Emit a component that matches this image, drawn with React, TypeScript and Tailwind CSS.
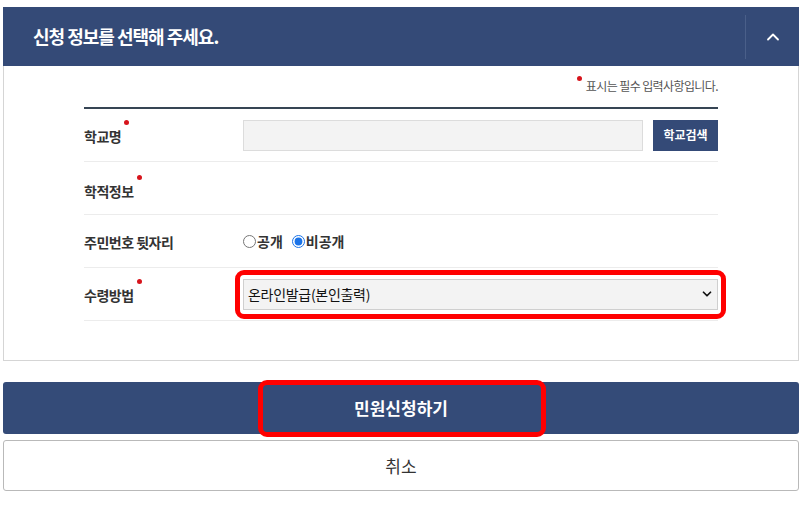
import React, { useState } from 'react';
import { ChevronUp, ChevronDown } from 'lucide-react';

const font = { fontFamily: '"Noto Sans CJK KR", "Noto Sans", sans-serif' };

const Dot = () => (
  <span className="absolute -right-[8px] -top-[6px] w-[5px] h-[5px] rounded-full bg-[#d7141c]" />
);

const Label: React.FC<{ text: string; required?: boolean }> = ({ text, required }) => (
  <div className="w-[159px] shrink-0">
    <span className="relative text-[14px] font-bold text-[#333] tracking-[-0.5px]">
      {text}
      {required && <Dot />}
    </span>
  </div>
);

const App: React.FC = () => {
  const [open, setOpen] = useState('N');

  return (
    <div className="w-[807px] h-[510px] bg-white px-[3px] pt-[7px]" style={font}>
      <div className="w-[796px]">
        {/* header */}
        <div className="h-[59px] bg-[#344a77] flex items-center justify-between">
          <h2 className="pl-[30px] text-[18px] font-bold text-white tracking-[-1px]">
            신청 정보를 선택해 주세요.
          </h2>
          <div className="h-[44px] flex items-center border-l border-[#4a5f89]">
            <button className="w-[53px] flex justify-center text-white">
              <ChevronUp size={20} strokeWidth={2.2} />
            </button>
          </div>
        </div>

        {/* body */}
        <div className="h-[295px] border border-t-0 border-[#d5d5d5] pl-[80px] pr-[80px]">
          <div className="h-[41px] flex justify-end items-end pb-[12px]">
            <span className="relative text-[12px] text-[#555] tracking-[-0.6px]">
              <span className="absolute -left-[9px] top-[-1px] w-[5px] h-[5px] rounded-full bg-[#d7141c]" />
              표시는 필수 입력사항입니다.
            </span>
          </div>

          <div className="border-t-2 border-[#364554]">
            <div className="h-[53px] flex items-center border-b border-[#ececec]">
              <Label text="학교명" required />
              <input className="w-[400px] h-[31px] bg-[#f3f3f3] border border-[#dcdcdc]" />
              <button className="ml-[10px] w-[65px] h-[31px] bg-[#344a77] text-white text-[12px] font-bold">
                학교검색
              </button>
            </div>
            <div className="h-[53px] flex items-center border-b border-[#ececec] pt-[4px]">
              <Label text="학적정보" required />
            </div>
            <div className="h-[53px] flex items-center border-b border-[#ececec]">
              <Label text="주민번호 뒷자리" />
              <label className="flex items-center text-[14px] font-bold text-[#333]">
                <input
                  type="radio"
                  name="rrn"
                  checked={open === 'Y'}
                  onChange={() => setOpen('Y')}
                  className="w-[13px] h-[13px] m-0 mr-[1px]"
                />
                공개
              </label>
              <label className="ml-[9px] flex items-center text-[14px] font-bold text-[#333]">
                <input
                  type="radio"
                  name="rrn"
                  checked={open === 'N'}
                  onChange={() => setOpen('N')}
                  className="w-[13px] h-[13px] m-0 mr-[1px] accent-[#1a73e8]"
                />
                비공개
              </label>
            </div>
            <div className="h-[53px] flex items-center border-b border-[#ececec]">
              <Label text="수령방법" required />
              <div className="relative w-[476px] h-[31px]">
                <div className="w-full h-full bg-[#f3f3f3] border border-[#cfcfcf] flex items-center justify-between pl-[4px] pr-[3px]">
                  <span className="text-[14px] text-[#111] tracking-[-0.3px]">온라인발급(본인출력)</span>
                  <ChevronDown size={14} strokeWidth={3} className="text-[#111]" />
                </div>
                <div className="absolute -left-[8px] -top-[9px] -right-[8px] -bottom-[9px] border-[5px] border-[#ff0000] rounded-[9px] pointer-events-none" />
              </div>
            </div>
          </div>
        </div>

        {/* buttons */}
        <div className="mt-[21px] flex flex-col gap-[6px]">
          <button className="relative h-[52px] bg-[#344b78] rounded-[3px] text-white text-[17px] font-bold">
            민원신청하기
            <span className="absolute left-[255px] top-[-2px] w-[288px] h-[57px] border-[5px] border-[#ff0000] rounded-[9px]" />
          </button>
          <button className="h-[51px] bg-white border border-[#b9b9b9] rounded-[3px] text-[#333] text-[17px]">
            취소
          </button>
        </div>
      </div>
    </div>
  );
};

export default App;
